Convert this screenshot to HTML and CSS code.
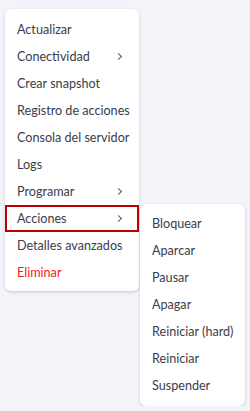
FILE: index.html
```html
<!DOCTYPE html>
<html lang="es">
<head>
    <meta charset="UTF-8">
    <meta name="viewport" content="width=device-width, initial-scale=1.0">
    <title>Menú</title>
    <link rel="stylesheet" href="styles.css">
</head>
<body>
    <div class="menus">
        <ul class="menu main">
            <li class="item">Actualizar</li>
            <li class="item has-sub">Conectividad</li>
            <li class="item">Crear snapshot</li>
            <li class="item">Registro de acciones</li>
            <li class="item">Consola del servidor</li>
            <li class="item">Logs</li>
            <li class="item has-sub">Programar</li>
            <li class="item has-sub active">Acciones</li>
            <li class="item">Detalles avanzados</li>
            <li class="item danger">Eliminar</li>
        </ul>

        <!-- submenu of Acciones -->
        <ul class="menu submenu">
            <li class="item">Bloquear</li>
            <li class="item">Aparcar</li>
            <li class="item">Pausar</li>
            <li class="item">Apagar</li>
            <li class="item">Reiniciar (hard)</li>
            <li class="item">Reiniciar</li>
            <li class="item">Suspender</li>
        </ul>
    </div>
</body>
</html>
```

FILE: styles.css
```css
* {
    box-sizing: border-box;
    margin: 0;
    padding: 0;
}

body {
    background-color: #f3f4f9;
    font-family: Lato, sans-serif;
    font-size: 12.6px;
    color: #3a3e4b;
    padding: 9px 0 0 5px;
}

.menus {
    display: flex;
    align-items: flex-start;
    gap: 1px;
}

.menu {
    list-style: none;
    background: white;
    border-radius: 6px;
    box-shadow: 0 1px 3px rgba(40, 45, 70, 0.22);
}

.main {
    width: 134px;
    padding: 7px 0 5px;
}

.submenu {
    width: 105px;
    margin-top: 195px;
    padding: 6px 0 7px;
}

.item {
    position: relative;
    height: 27px;
    line-height: 27px;
    padding-left: 12px;
    white-space: nowrap;
}

.has-sub::after {
    content: "";
    position: absolute;
    right: 18px;
    top: 11px;
    width: 4px;
    height: 4px;
    border-top: 1.3px solid #555a66;
    border-right: 1.3px solid #555a66;
    transform: rotate(45deg);
}

.active {
    border: 2px solid #c00000;
    line-height: 23px;
    padding-left: 10px;
}

.active::after {
    right: 16px;
    top: 9px;
}

.danger {
    color: #ef1c24;
}
```
